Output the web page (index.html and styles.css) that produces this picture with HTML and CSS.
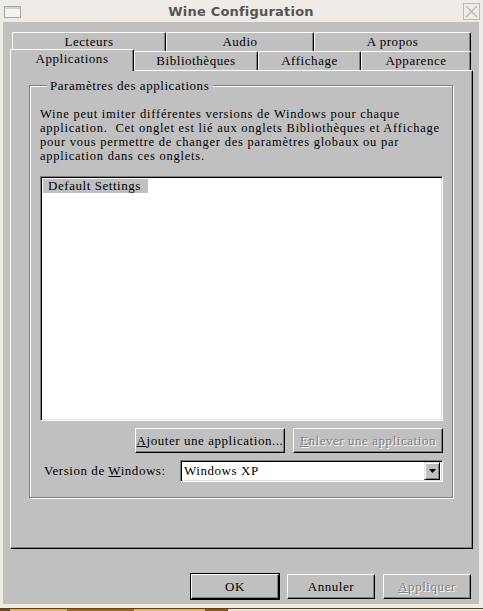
FILE: index.html
```html
<!DOCTYPE html>
<html>
<head>
    <title>Wine Configuration</title>
    <link rel="stylesheet" href="styles.css">
</head>
<body>
    <div class="window">
        <div class="titlebar">
            <svg class="win-icon" width="17" height="12" viewBox="0 0 17 12">
                <rect x="0.5" y="0.5" width="16" height="11" fill="#f4f2ef" stroke="#a8a6a2"/>
                <rect x="1" y="1" width="15" height="2" fill="#d6d3cf"/>
            </svg>
            <div class="title">Wine Configuration</div>
            <svg class="close" width="17" height="17" viewBox="0 0 17 17">
                <rect x="0.5" y="0.5" width="16" height="16" fill="none" stroke="#bdbab6"/>
                <path d="M3 3 L14 14 M14 3 L3 14" stroke="#bdbab6" stroke-width="1.4"/>
            </svg>
        </div>

        <div class="client">
            <div class="tabs tabs-top">
                <div class="tab" style="width: 154px">Lecteurs</div>
                <div class="tab" style="width: 148px">Audio</div>
                <div class="tab" style="width: 157px">A propos</div>
            </div>
            <div class="tabs tabs-bottom">
                <div class="tab selected" style="width: 124px">Applications</div>
                <div class="tab" style="width: 124px">Bibliothèques</div>
                <div class="tab" style="width: 103px">Affichage</div>
                <div class="tab" style="width: 110px">Apparence</div>
            </div>

            <div class="panel">
                <div class="group">
                    <div class="legend">Paramètres des applications</div>
                    <p class="desc">Wine peut imiter différentes versions de Windows pour chaque<br>application.&nbsp; Cet onglet est lié aux onglets Bibliothèques et Affichage<br>pour vous permettre de changer des paramètres globaux ou par<br>application dans ces onglets.</p>

                    <div class="listbox">
                        <div class="list-item">Default Settings</div>
                    </div>

                    <div class="list-buttons">
                        <button class="button"><u>A</u>jouter une application...</button>
                        <button class="button disabled"><u>E</u>nlever une application</button>
                    </div>

                    <div class="version-row">
                        <span class="version-label">Version de <u>W</u>indows:</span>
                        <div class="combo">
                            <span class="combo-text">Windows XP</span>
                            <span class="combo-arrow">
                                <svg width="7" height="4" viewBox="0 0 7 4"><path d="M0 0 H7 L3.5 4 Z" fill="#000"/></svg>
                            </span>
                        </div>
                    </div>
                </div>
            </div>

            <div class="dialog-buttons">
                <button class="button default">OK</button>
                <button class="button">Annuler</button>
                <button class="button disabled"><u>A</u>ppliquer</button>
            </div>
        </div>
    </div>
    <div class="desktop"></div>
</body>
</html>
```

FILE: styles.css
```css
body {
    margin: 0;
    width: 483px;
    height: 611px;
    overflow: hidden;
    background: #efebe7;
    font-family: "Liberation Serif", serif;
    font-size: 13px;
    letter-spacing: 0.55px;
    color: #000;
}
.window {
    height: 608px;
    display: flex;
    flex-direction: column;
}
.titlebar {
    height: 22px;
    display: flex;
    align-items: center;
    padding: 0 3px 0 4px;
}
.win-icon {
    margin-top: 2px;
}
.title {
    flex: 1;
    text-align: center;
    font-family: "DejaVu Sans", sans-serif;
    font-weight: bold;
    font-size: 13px;
    letter-spacing: 0.2px;
    color: #555;
    padding-right: 2px;
}
.client {
    margin: 0 4px 0 3px;
    height: 582px;
    background: #c0c0c0;
    padding: 10px 0 0 7px;
    box-sizing: border-box;
}
.tabs {
    display: flex;
    height: 19px;
}
.tabs-top {
    margin-left: 2px;
}
.tab {
    box-sizing: border-box;
    height: 19px;
    border-top: 1px solid #fff;
    border-left: 1px solid #fff;
    border-right: 1px solid #000;
    border-radius: 2px 2px 0 0;
    box-shadow: inset -1px 0 0 #808080;
    text-align: center;
    line-height: 18px;
    background: #c0c0c0;
}
.tab.selected {
    height: 22px;
    margin-top: -2px;
    line-height: 17px;
    position: relative;
    z-index: 1;
}
.panel {
    box-sizing: border-box;
    width: 463px;
    height: 479px;
    border-top: 1px solid #fff;
    border-left: 1px solid #fff;
    border-right: 1px solid #000;
    border-bottom: 1px solid #000;
    box-shadow: inset -1px -1px 0 #808080;
    padding: 14px 0 0 18px;
}
.group {
    box-sizing: border-box;
    width: 424px;
    height: 413px;
    border: 1px solid #808080;
    box-shadow: 1px 1px 0 #fff, inset 1px 1px 0 #fff;
    padding: 0 9px 0 10px;
}
.legend {
    width: fit-content;
    margin: -7px 0 0 7px;
    padding: 0 4px 0 3px;
    background: #c0c0c0;
    line-height: 13px;
}
.desc {
    margin: 15px 0 0 0;
    font-size: 12.5px;
    letter-spacing: 0.75px;
    line-height: 14px;
    white-space: nowrap;
}
.listbox {
    box-sizing: border-box;
    height: 245px;
    margin-top: 13px;
    background: #fff;
    border-top: 1px solid #808080;
    border-left: 1px solid #808080;
    border-right: 1px solid #fff;
    border-bottom: 1px solid #fff;
    box-shadow: inset 1px 1px 0 #000, inset -1px -1px 0 #dfdfdf;
    padding: 2px 0 0 2px;
}
.list-item {
    width: 105px;
    height: 14px;
    line-height: 14px;
    padding-left: 5px;
    box-sizing: border-box;
    background: #c0c0c0;
}
.list-buttons {
    display: flex;
    justify-content: flex-end;
    gap: 8px;
    margin-top: 7px;
}
.button {
    box-sizing: border-box;
    width: 150px;
    height: 25px;
    padding: 0;
    background: #c0c0c0;
    font-family: "Liberation Serif", serif;
    font-size: 13px;
    letter-spacing: 0.55px;
    color: #000;
    border-top: 1px solid #fff;
    border-left: 1px solid #fff;
    border-right: 1px solid #000;
    border-bottom: 1px solid #000;
    box-shadow: inset -1px -1px 0 #808080;
}
.button.disabled {
    color: #808080;
    text-shadow: 1px 1px 0 #fff;
}
.button.default {
    outline: 1px solid #000;
}
.version-row {
    display: flex;
    align-items: center;
    margin-top: 7px;
}
.version-label {
    width: 136px;
    padding-left: 4px;
}
.combo {
    box-sizing: border-box;
    flex: 1;
    height: 22px;
    display: flex;
    align-items: center;
    background: #fff;
    border-top: 1px solid #808080;
    border-left: 1px solid #808080;
    border-right: 1px solid #fff;
    border-bottom: 1px solid #fff;
    box-shadow: inset 1px 1px 0 #000, inset -1px -1px 0 #dfdfdf;
    padding: 2px 2px 2px 3px;
}
.combo-text {
    flex: 1;
}
.combo-arrow {
    box-sizing: border-box;
    width: 16px;
    height: 18px;
    display: flex;
    align-items: center;
    justify-content: center;
    background: #c0c0c0;
    border-top: 1px solid #dfdfdf;
    border-left: 1px solid #dfdfdf;
    border-right: 1px solid #000;
    border-bottom: 1px solid #000;
    box-shadow: inset 1px 1px 0 #fff, inset -1px -1px 0 #808080;
}
.dialog-buttons {
    display: flex;
    justify-content: flex-end;
    gap: 8px;
    margin: 25px 8px 0 0;
}
.dialog-buttons .button {
    width: 88px;
}
.desktop {
    height: 3px;
    border-top: 1px solid #5a4020;
    box-sizing: border-box;
    background: linear-gradient(to right, #6b4a1c 0 10px, #d9b45a 10px 67px, #a5680f 67px 134px, #dcb860 134px 205px, #8a5a10 205px 227px, #444 227px 228px, #e8e4e0 228px);
}
```
